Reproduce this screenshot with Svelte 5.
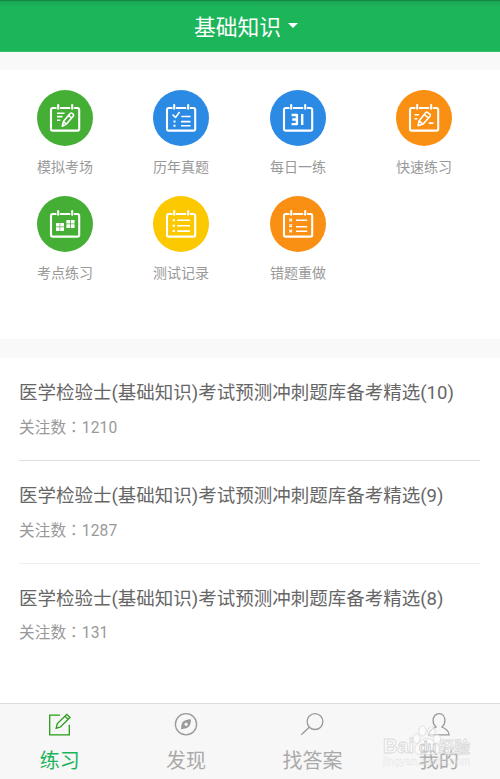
<script lang="ts">
  type Shortcut = { label: string; kind: string; color: string };

  const shortcuts: Shortcut[] = [
    { label: "模拟考场", kind: "write", color: "green" },
    { label: "历年真题", kind: "check", color: "blue" },
    { label: "每日一练", kind: "date", color: "blue" },
    { label: "快速练习", kind: "sketch", color: "orange" },
    { label: "考点练习", kind: "blocks", color: "green" },
    { label: "测试记录", kind: "list", color: "yellow" },
    { label: "错题重做", kind: "wrong", color: "orange" },
  ];

  const papers = [
    { title: "医学检验士(基础知识)考试预测冲刺题库备考精选(10)", follows: 1210 },
    { title: "医学检验士(基础知识)考试预测冲刺题库备考精选(9)", follows: 1287 },
    { title: "医学检验士(基础知识)考试预测冲刺题库备考精选(8)", follows: 131 },
  ];

  const tabs = [
    { id: "practice", label: "练习" },
    { id: "discover", label: "发现" },
    { id: "search", label: "找答案" },
    { id: "mine", label: "我的" },
  ];

  let active = $state("practice");
</script>

<div class="app">
  <header class="topbar">
    <span>基础知识</span>
    <i class="caret"></i>
  </header>

  <section class="shortcuts">
    {#each shortcuts as item}
      <div class="shortcut">
        <svg class="badge {item.color}" viewBox="0 0 56 56">
          <circle cx="28" cy="28" r="28" />
          <g class="line">
            <path d="M18.7 18H15.8Q14 18 14 19.9V38.9Q14 40.6 15.8 40.6H40.4Q42.2 40.6 42.2 38.9V19.9Q42.2 18 40.4 18H37.8M23.8 18H32.4" />
            <path d="M21.2 15V18.8M35.2 15V18.8" />
          </g>
          {#if item.kind === "write"}
            <g class="thin">
              <path d="M20 23.2H27.5M20 26.6H25.5M20 30.2H23.3" />
              <path d="M25.2 36.2L26.4 31.6L33.1 23.5Q34.1 22.5 35.3 23.4L36.1 24.1Q37.1 25 36.2 26.2L29.4 34.1ZM31.6 25.4L34.4 27.8M26.4 31.6L29.4 34.1" />
            </g>
          {:else if item.kind === "check"}
            <g class="thin">
              <path d="M19.5 24.5L22.5 27.4L26.6 22M28.3 26.5H37.5M28 31.6H37.5M28 35.8H37.5" />
              <path class="dot" d="M20.5 31.6H22.5M20.5 35.8H22.5" />
            </g>
          {:else if item.kind === "date"}
            <path class="numeral" d="M21.6 25H26.9V34.1H21.6M22.3 29.5H26.5M32.2 24.1V35" />
          {:else if item.kind === "sketch"}
            <g class="thin">
              <path d="M18.5 24.8H23M18.5 28.7H21.4M32.8 33.1H37.5" />
              <path d="M22 35.8L23 31L29.8 22.6Q30.6 21.8 31.7 22.5L34 24.4Q34.8 25.2 34 26.2L27.2 34.1ZM28.3 24.5L32.3 27.8M23 31L27.2 34.1" />
            </g>
          {:else if item.kind === "blocks"}
            <path class="blocks" d="M19 27h3.6v3.6H19zM23.2 27h3.8v3.6h-3.8zM19 31.2h3.6v3.8H19zM23.2 31.2h3.8v3.8h-3.8zM29.4 24H33v3.6h-3.6zM33.8 24h3.8v3.6h-3.8zM29.4 28.3H33v3.8h-3.6zM33.8 28.3h3.8v3.8h-3.8z" />
          {:else if item.kind === "list"}
            <g class="thin">
              <path d="M24.2 24.2H37M24.2 29.7H37M24.2 35.1H37" />
              <path class="dot" d="M19.6 24.2H22M19.6 29.7H22M19.6 35.1H22" />
            </g>
          {:else}
            <g class="thin">
              <path d="M26 24.2H37.2M26 30.7H37.2M26 35.2H37.2" />
              <path class="cross" d="M19.3 22.7L22 25.4M22 22.7L19.3 25.4M19.3 28.3L22 31M22 28.3L19.3 31M19.3 33.7L22 36.4M22 33.7L19.3 36.4" />
            </g>
          {/if}
        </svg>
        <span class="name">{item.label}</span>
      </div>
    {/each}
  </section>

  <section class="papers">
    {#each papers as paper}
      <article class="paper">
        <div class="title">{paper.title}</div>
        <div class="meta">关注数<span class="colon" lang="zh-TW">：</span>{paper.follows}</div>
      </article>
    {/each}
  </section>

  <nav class="tabbar">
    {#each tabs as tab}
      <button class="tab" class:active={active === tab.id} onclick={() => (active = tab.id)}>
        <svg viewBox="0 0 24 24">
          {#if tab.id === "practice"}
            <path d="M12 3.2H1.7V22.8H21.3V12.7" />
            <path d="M8.2 16.2L9.2 11.8L18.8 2.4L22 5.5L12.4 15ZM17 4.3L20.1 7.4" />
          {:else if tab.id === "discover"}
            <circle cx="12" cy="12.3" r="10.6" />
            <path class="solid" fill-rule="evenodd" d="M17 7.2Q10.7 7.5 8.5 10.2Q7 12.6 7 17.2Q13.2 17 15.4 14.1Q17 11.7 17 7.2ZM12.1 10.6A1.7 1.7 0 1 1 12.1 14A1.7 1.7 0 1 1 12.1 10.6Z" />
          {:else if tab.id === "search"}
            <circle cx="15" cy="9.6" r="7.9" />
            <path d="M9.2 15.2L1.3 22.8" />
          {:else}
            <path d="M12 1.7C8.3 1.7 6.1 4.8 6.1 8.6C6.1 11.4 7.3 13.7 9 15C5.2 16.6 2.2 18.6 1.9 22.8H22.1C21.8 18.6 18.8 16.6 15 15C16.7 13.7 17.9 11.4 17.9 8.6C17.9 4.8 15.7 1.7 12 1.7Z" />
          {/if}
        </svg>
        <span>{tab.label}</span>
      </button>
    {/each}

    <svg class="watermark" viewBox="0 0 92 50">
      <g class="paw">
        <ellipse cx="34.5" cy="21.5" rx="3.5" ry="4.8" />
        <ellipse cx="40.5" cy="14" rx="3.7" ry="5" />
        <ellipse cx="49.5" cy="14.5" rx="3.7" ry="5" />
        <ellipse cx="55" cy="22" rx="3.5" ry="4.5" />
        <path d="M45 21.5C40 21.5 38.5 25 35 27.5C31.5 30.5 31.5 37 38 37.5H52C58.5 37 58.5 30 55 27.5C51.5 25 50 21.5 45 21.5Z" />
      </g>
      <text class="brand" x="1" y="36">Bai</text>
      <text class="du" x="37" y="35">du</text>
      <text class="brand cn" x="57" y="36">经验</text>
      <text class="site" x="1" y="48" textLength="87">jingyan.baidu.com</text>
    </svg>
  </nav>
</div>

<style>
  :global(body) {
    background: #f9f9f9;
  }

  .app {
    display: flex;
    flex-direction: column;
    height: 779px;
    overflow: hidden;
    font-family: Roboto, "Noto Sans CJK SC", sans-serif;
  }

  .topbar {
    box-sizing: border-box;
    height: 52px;
    display: flex;
    align-items: center;
    justify-content: center;
    gap: 7px;
    padding: 0 8px 1px 0;
    background: linear-gradient(#128844 0 1px, #1aa552 1px, #1cb55a 7px);
    border-bottom: 1px solid #38bd6c;
    color: #fff;
    font-size: 21.8px;
  }

  .caret {
    border: 5px solid transparent;
    border-top-color: #fff;
    border-bottom: 0;
    margin-top: 1px;
  }

  .shortcuts {
    box-sizing: border-box;
    display: grid;
    grid-template-columns: 116px 117px 116px 136px;
    grid-auto-rows: 106px;
    height: 269px;
    margin-top: 18px;
    padding: 20px 0 0 7px;
    background: #fff;
  }

  .shortcut {
    display: flex;
    flex-direction: column;
    align-items: center;
  }

  .shortcut:nth-child(4n + 2) {
    padding-right: 1px;
  }

  .badge {
    width: 56px;
    height: 56px;
    fill: none;
    stroke: #fff;
  }

  .badge circle {
    stroke: none;
  }

  .green circle { fill: #45af35; }
  .blue circle { fill: #2b8ae4; }
  .orange circle { fill: #f98f13; }
  .yellow circle { fill: #fcc800; }

  .line {
    stroke-width: 2.1;
    stroke-linecap: round;
  }

  .thin {
    stroke-width: 1.6;
    stroke-linejoin: round;
  }

  .dot {
    stroke-width: 2;
  }

  .cross {
    stroke-width: 1.2;
  }

  .numeral {
    stroke-width: 2.4;
    stroke-linejoin: round;
  }

  .blocks {
    fill: #fff;
    stroke: none;
  }

  .name {
    margin-top: 11px;
    font-size: 14px;
    line-height: 20px;
    color: #999;
  }

  .papers {
    flex: 1;
    margin-top: 19px;
    padding: 0 20px 0 19px;
    background: #fff;
  }

  .paper {
    box-sizing: border-box;
    height: 103px;
    padding: 20px 0 0;
    border-bottom: 1px solid #dedede;
  }

  .paper:nth-child(2) {
    border-color: #efefef;
  }

  .paper:last-child {
    border: 0;
  }

  .title {
    font-size: 18.5px;
    line-height: 30px;
    color: #666;
    white-space: nowrap;
  }

  .meta {
    margin-top: 6px;
    font-size: 15.6px;
    line-height: 24px;
    letter-spacing: 0.1px;
    color: #999;
  }

  .paper:last-child .title {
    margin-bottom: -1px;
  }

  .colon {
    font-family: "Noto Sans CJK TC", sans-serif;
  }

  .tabbar {
    position: relative;
    box-sizing: border-box;
    display: grid;
    grid-template-columns: repeat(4, 126.4px);
    height: 76px;
    border-top: 1px solid #dcdcdc;
    background: #f7f7f7;
  }

  .tab {
    display: flex;
    flex-direction: column;
    align-items: center;
    padding: 8px 7px 0 0;
    border: 0;
    background: none;
    color: #aaa;
    font: inherit;
    font-size: 20px;
    line-height: 30px;
  }

  .tab svg {
    width: 24px;
    height: 24px;
    margin-bottom: 10px;
    fill: none;
    stroke: #999;
    stroke-width: 1.3;
  }

  .tab .solid {
    fill: #999;
    stroke: none;
  }

  .tab.active {
    color: #1cb55a;
  }

  .tab.active svg {
    stroke: #269c16;
  }

  .watermark {
    position: absolute;
    left: 382px;
    top: 13px;
    width: 92px;
    height: 50px;
    fill: #fff;
    fill-opacity: 0.75;
    stroke: #d2d2d2;
    stroke-width: 0.8;
    opacity: 0.8;
    pointer-events: none;
  }

  .brand {
    font: bold 20px "Liberation Sans", sans-serif;
  }

  .cn {
    font: bold 15.5px "Noto Sans CJK SC", sans-serif;
  }

  .du {
    font: bold 14px "Liberation Sans", sans-serif;
    stroke: #bbb;
  }

  .site {
    font: 10.5px "Liberation Sans", sans-serif;
    stroke-width: 0.3;
    opacity: 0.7;
  }
</style>
